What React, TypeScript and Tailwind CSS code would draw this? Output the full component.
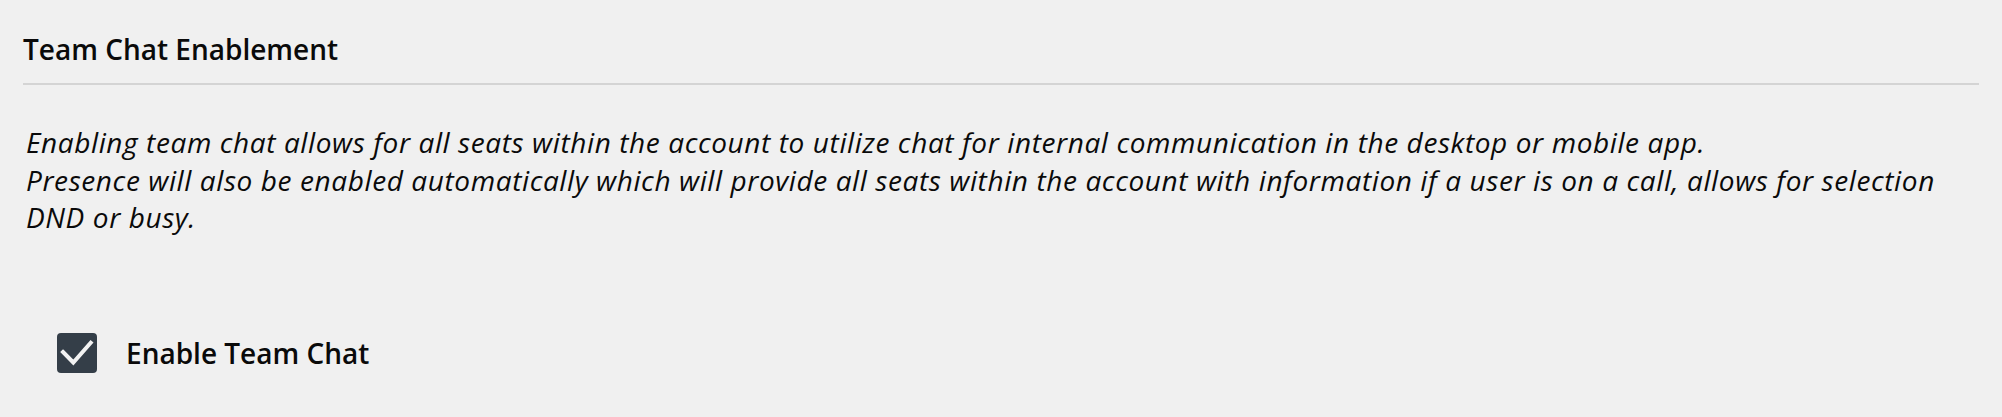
import React from "react";

const L1 =
  "Enabling team chat allows for all seats within the account to utilize chat for internal communication in the desktop or mobile app.";
const L2 =
  "Presence will also be enabled automatically which will provide all seats within the account with information if a user is on a call, allows for selection";

export default function App() {
  return (
    <div className="min-h-screen bg-[#f0f0f0] px-[23px] pt-[35px] text-[#0a0a0a] font-['Open_Sans',sans-serif]">
      <h2 className="border-b-2 border-[#d4d4d4] pb-[20px] text-[28px] font-semibold leading-[28px]">
        Team Chat Enablement
      </h2>
      <p className="mt-[39px] pl-[3px] text-[28px] italic leading-[37.5px] tracking-[0.6px]">
        {L1}
        <br />
        {L2} DND or busy.
      </p>
      <label className="ml-[34px] mt-[96px] flex items-center gap-[29px]">
        <span className="flex h-[40px] w-[40px] items-center justify-center rounded-[4px] bg-[#343e48]">
          <svg width="40" height="40" viewBox="0 0 40 40" fill="none">
            <path
              d="M6 19 L16.3 29.5 L33.7 9.7"
              stroke="#f2f2f2"
              strokeWidth="4"
              strokeLinecap="square"
            />
          </svg>
        </span>
        <span className="text-[28px] font-semibold leading-[40px]">Enable Team Chat</span>
      </label>
    </div>
  );
}
